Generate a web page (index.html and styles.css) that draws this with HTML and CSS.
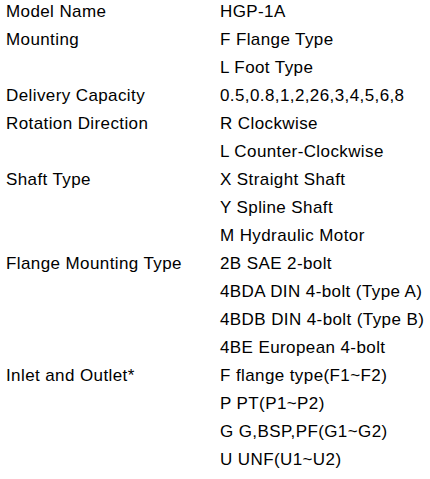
FILE: index.html
```html
<!DOCTYPE html>
<html lang="en">
<head>
    <meta charset="UTF-8">
    <title>HGP-1A Model Code</title>
    <link rel="stylesheet" href="styles.css">
</head>
<body>
    <table class="spec">
        <tr><td class="label">Model Name</td><td>HGP-1A</td></tr>
        <tr><td class="label">Mounting</td><td>F Flange Type</td></tr>
        <tr><td class="label"></td><td>L Foot Type</td></tr>
        <tr><td class="label">Delivery Capacity</td><td>0.5,0.8,1,2,26,3,4,5,6,8</td></tr>
        <tr><td class="label">Rotation Direction</td><td>R Clockwise</td></tr>
        <tr><td class="label"></td><td>L Counter-Clockwise</td></tr>
        <tr><td class="label">Shaft Type</td><td>X Straight Shaft</td></tr>
        <tr><td class="label"></td><td>Y Spline Shaft</td></tr>
        <tr><td class="label"></td><td>M Hydraulic Motor</td></tr>
        <tr><td class="label">Flange Mounting Type</td><td>2B SAE 2-bolt</td></tr>
        <tr><td class="label"></td><td>4BDA DIN 4-bolt (Type A)</td></tr>
        <tr><td class="label"></td><td>4BDB DIN 4-bolt (Type B)</td></tr>
        <tr><td class="label"></td><td>4BE European 4-bolt</td></tr>
        <tr><td class="label">Inlet and Outlet*</td><td>F flange type(F1~F2)</td></tr>
        <tr><td class="label"></td><td>P PT(P1~P2)</td></tr>
        <tr><td class="label"></td><td>G G,BSP,PF(G1~G2)</td></tr>
        <tr><td class="label"></td><td>U UNF(U1~U2)</td></tr>
    </table>
</body>
</html>
```

FILE: styles.css
```css
body {
    margin: 0;
    background: white;
    font-family: "Liberation Sans", Arial, sans-serif;
    font-size: 17px;
    letter-spacing: 0.4px;
    color: #000;
}
.spec {
    border-collapse: collapse;
    margin-top: -2px;
}
.spec td {
    padding: 0;
    height: 28px;
    line-height: 28px;
    white-space: nowrap;
}
.spec .label {
    width: 214px;
    padding-left: 6px;
}
```
